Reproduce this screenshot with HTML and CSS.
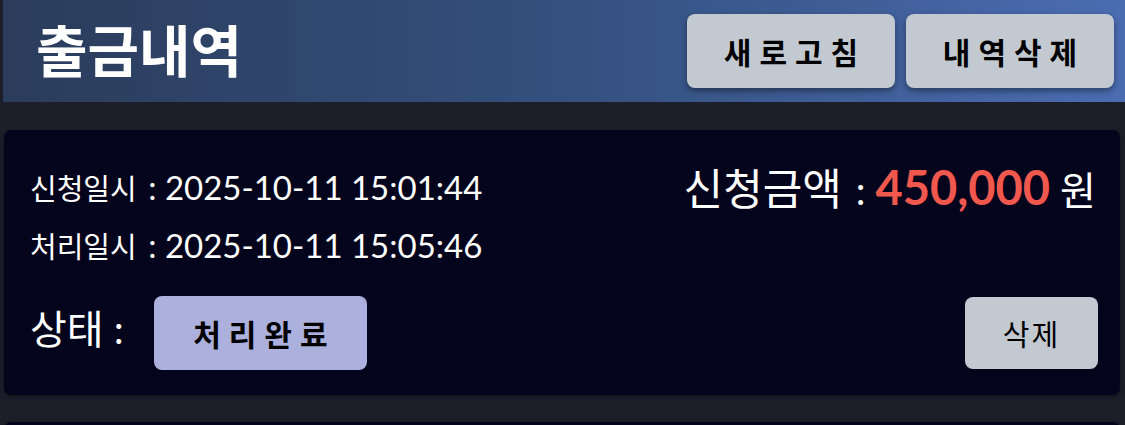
FILE: index.html
```html
<!DOCTYPE html>
<html lang="ko">
   <head>
      <meta charset="UTF-8">
      <meta name="viewport" content="width=device-width, initial-scale=1.0">
      <title>출금내역</title>
      <link rel="stylesheet" href="styles.css">
   </head>
   <body>
      <div class="header">
         <h1 class="title">출금내역</h1>
         <div class="header-btns">
            <button type="button" class="top-btn">새로고침</button>
            <button type="button" class="top-btn">내역삭제</button>
         </div>
      </div>
      <div class="list">
         <div class="card">
            <div class="card-top">
               <div class="dates">
                  <div class="date-line"><span class="ko">신청일시</span> : 2025-10-11 15:01:44</div>
                  <div class="date-line"><span class="ko">처리일시</span> : 2025-10-11 15:05:46</div>
               </div>
               <div class="amount"><span class="amount-label">신청금액</span> : <span class="money">450,000</span> 원</div>
            </div>
            <div class="card-bottom">
               <div class="status">
                  <span class="status-label">상태 :</span>
                  <span class="badge">처리완료</span>
               </div>
               <button type="button" class="del-btn">삭제</button>
            </div>
         </div>
         <div class="card"></div>
      </div>
   </body>
</html>
```
FILE: styles.css
```css
body{
margin: 0;
padding-left: 3px;
background-color: #1c1f2a;
font-family: Lato, "Noto Sans CJK KR", sans-serif;
color: white;
overflow: hidden;
}
.header{
height: 102px;
display: flex;
align-items: center;
justify-content: space-between;
padding: 0 11px 0 33px;
background: linear-gradient(90deg, #2b3c5b 0%, #34507e 50%, #4b6cb1 100%);
}
.title{
margin: 0;
font-size: 56px;
font-weight: 700;
line-height: 1;
}
.header-btns{
display: flex;
gap: 11px;
}
.top-btn{
width: 208px;
height: 74px;
border: none;
border-radius: 8px;
background-color: #c2c9d0;
color: black;
font-family: Lato, "Noto Sans CJK KR", sans-serif;
font-size: 30px;
font-weight: 700;
letter-spacing: 8px;
text-indent: 8px;
box-shadow: 0px 3px 6px rgba(0, 0, 0, 0.4);
}
.list{
padding: 28px 5px 0 1px;
}
.card{
background-color: #04041c;
border-radius: 7px;
padding: 36px 22px 25px 26px;
margin-bottom: 27px;
box-shadow: 0px 2px 6px rgba(0, 0, 0, 0.35);
}
.card-top{
display: flex;
justify-content: space-between;
align-items: flex-start;
}
.dates{
display: flex;
flex-direction: column;
gap: 14px;
}
.date-line{
font-size: 33px;
line-height: 42px;
}
.ko{
font-size: 29px;
margin-right: 3px;
}
.amount{
font-size: 39px;
line-height: 42px;
padding-right: 2px;
}
.amount-label{
font-size: 43px;
margin-right: 4px;
}
.money{
color: #f0584e;
font-size: 47px;
font-weight: 700;
}
.card-bottom{
display: flex;
justify-content: space-between;
align-items: center;
margin-top: 28px;
}
.status{
display: flex;
align-items: center;
gap: 30px;
}
.status-label{
font-size: 40px;
line-height: 1;
margin-top: -8px;
}
.badge{
width: 213px;
height: 74px;
display: flex;
align-items: center;
justify-content: center;
border-radius: 8px;
background-color: #abb0dc;
color: black;
font-size: 30px;
font-weight: 700;
letter-spacing: 8px;
text-indent: 8px;
}
.del-btn{
width: 133px;
height: 72px;
border: none;
border-radius: 8px;
background-color: #c2c9d0;
color: black;
font-family: Lato, "Noto Sans CJK KR", sans-serif;
font-size: 29px;
letter-spacing: 2px;
}
```
